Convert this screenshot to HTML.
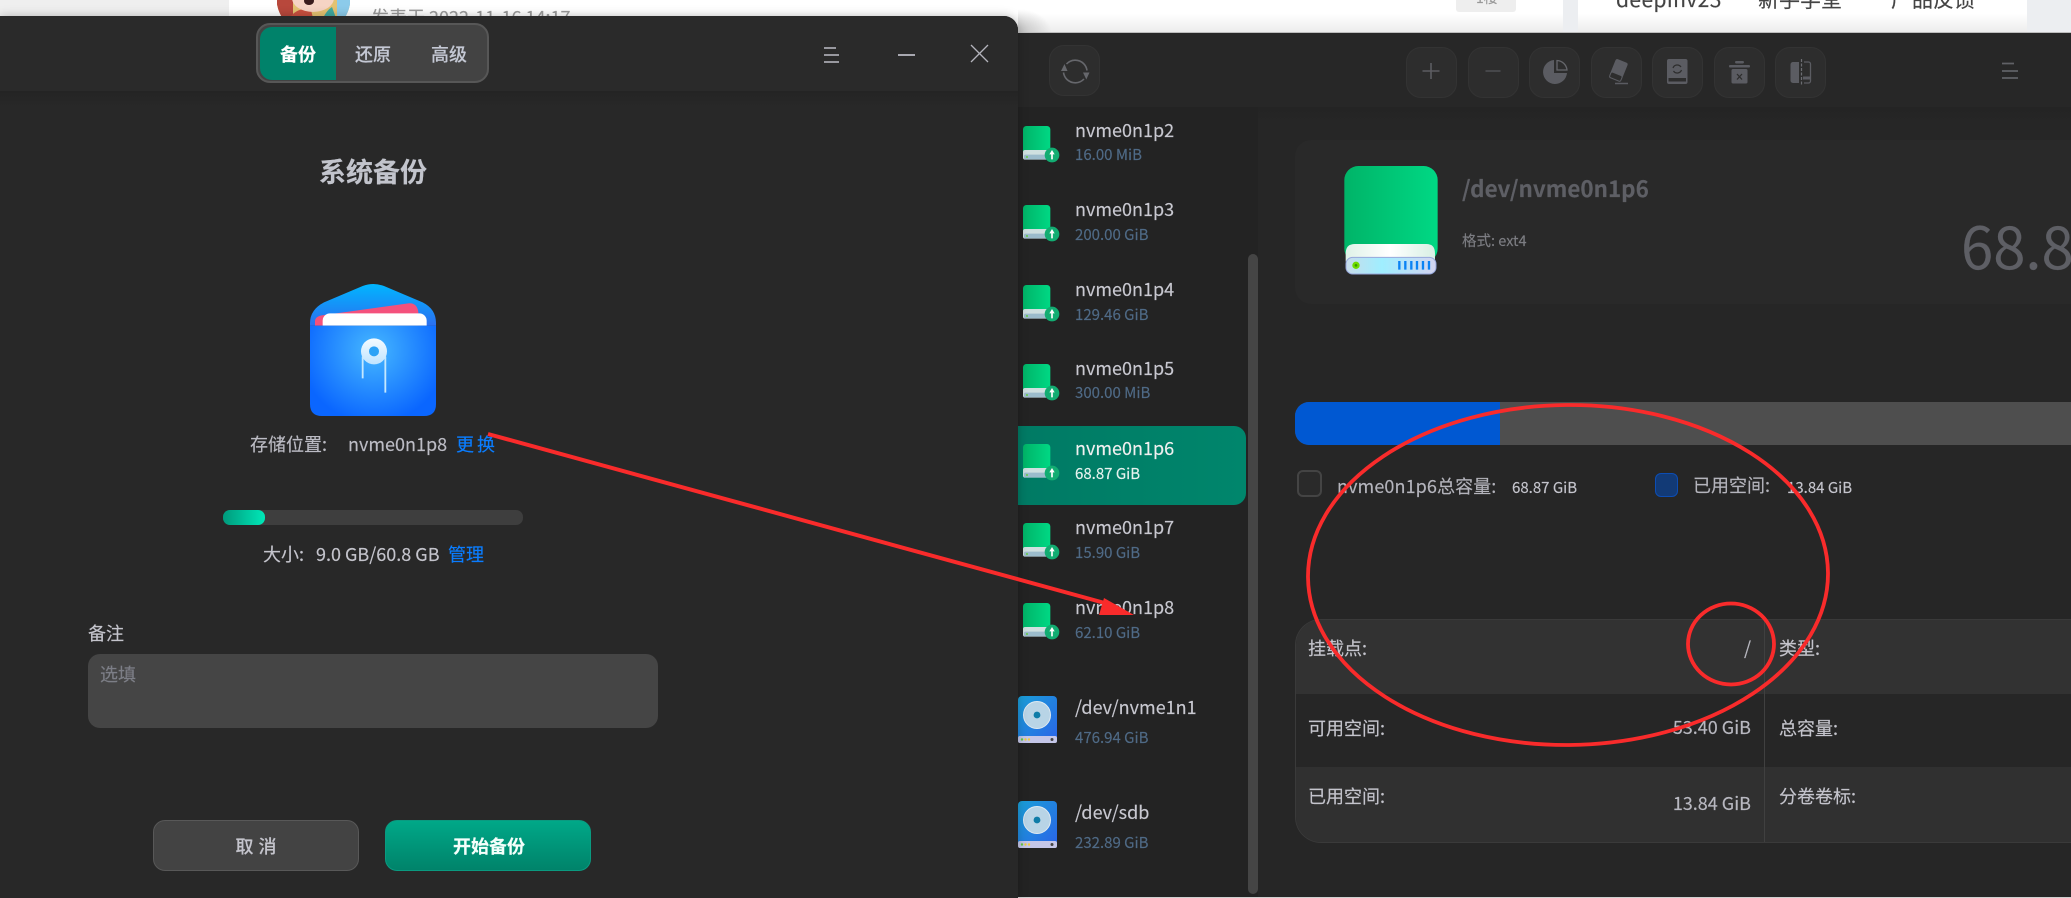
<!DOCTYPE html>
<html lang="zh"><head><meta charset="utf-8"><title>系统备份</title>
<style>
html,body{margin:0;padding:0;width:2071px;height:898px;overflow:hidden;background:#262626}
body{position:relative;font-family:"Noto Sans CJK SC","Liberation Sans",sans-serif;font-size:18px;color:#c4c4cc;-webkit-text-stroke:.15px currentColor}
div,span,svg{position:absolute}
.t{line-height:26px;height:26px;white-space:nowrap}
.c{transform:translateX(-50%)}
.n{left:1075px;color:#c8c8d0;font-size:18px}
.s{left:1075px;color:#4f6a86;font-size:15px}
.b{width:49px;height:49px;border:1px solid #333;border-radius:15px;background:#2d2d2d;box-sizing:content-box}
.v{right:320px;color:#b8b8c0;text-align:right}
</style></head><body>
<!-- web page behind -->
<div style="left:0;top:0;width:2071px;height:33px;background:linear-gradient(#fff 40%,#ececec)"></div>
<div style="left:0;top:0;width:229px;height:33px;background:#efefef"></div>
<div style="left:1563px;top:0;width:15px;height:33px;background:#eceef1"></div>
<div style="left:2027px;top:0;width:44px;height:33px;background:#eceef1"></div>
<div style="left:1018px;top:8px;width:34px;height:25px;background:radial-gradient(ellipse 34px 24px at 0 100%,#c0c0c0,rgba(255,255,255,0))"></div>
<svg style="left:277px;top:0" width="73" height="18" viewBox="0 0 73 18">
<defs><clipPath id="av"><circle cx="36.500" cy="-2" r="37"/></clipPath></defs>
<g clip-path="url(#av)">
<rect x="0" y="0" width="73" height="18" fill="#e4c272"/>
<rect x="0" y="0" width="16" height="18" fill="#b8483c"/>
<rect x="60" y="0" width="13" height="18" fill="#8ccbea"/>
<path d="M12 18Q22 6 34 10L36 18z" fill="#c9503f"/>
<ellipse cx="36" cy="-2" rx="21" ry="14" fill="#f6d4c4"/>
<ellipse cx="32" cy="1" rx="5" ry="4" fill="#3a1c1c"/>
<path d="M46 18q4-8 9-11l4 11z" fill="#3fa8a0"/>
</g></svg>
<div class="t" style="left:371px;top:4px;color:#9a9a9a;font-size:18px">发表于 2022-11-16 14:17</div>
<div style="left:1456px;top:0;width:60px;height:12px;background:#eee;border-radius:0 0 3px 3px"></div>
<div class="t" style="left:1476px;top:-15px;color:#999;font-size:14px">1楼</div>
<div class="t" style="left:1616px;top:-14px;color:#444;font-size:21px;letter-spacing:.4px">deepinv23</div>
<div class="t" style="left:1758px;top:-14px;color:#444;font-size:21px">新手学堂</div>
<div class="t" style="left:1891px;top:-14px;color:#444;font-size:21px">产品反馈</div>

<!-- right window -->
<div style="left:1018px;top:32px;width:1053px;height:865px;background:#262626;border-top:1px solid #bdbdbd;box-sizing:border-box"></div>
<div style="left:0;top:897px;width:2071px;height:1px;background:#cfcfcf"></div>
<div style="left:1018px;top:33px;width:1053px;height:74px;background:#272727"></div>
<div style="left:1018px;top:107px;width:240px;height:790px;background:#232323"></div>
<div style="left:1258px;top:107px;width:813px;height:16px;background:linear-gradient(#242424,#262626)"></div>

<div class="b" style="left:1049px;top:45px"></div>
<div class="b" style="left:1406px;top:47px"></div>
<div class="b" style="left:1468px;top:47px"></div>
<div class="b" style="left:1529px;top:47px"></div>
<div class="b" style="left:1591px;top:47px"></div>
<div class="b" style="left:1652px;top:47px"></div>
<div class="b" style="left:1714px;top:47px"></div>
<div class="b" style="left:1775px;top:47px"></div>

<div style="left:1018px;top:426px;width:228px;height:79px;background:linear-gradient(90deg,#007a64,#00866c);border-radius:0 12px 12px 0"></div>
<div style="left:1248px;top:254px;width:10px;height:640px;background:#454545;border-radius:5px"></div>

<div style="left:1295px;top:140px;width:776px;height:164px;background:#292929;border-radius:16px 0 0 16px"></div>
<div style="left:1295px;top:402px;width:776px;height:43px;background:#4e4e4e;border-radius:14px 0 0 14px"></div>
<div style="left:1295px;top:402px;width:205px;height:43px;background:#0058d2;border-radius:14px 0 0 14px"></div>
<div style="left:1297px;top:470px;width:25px;height:27px;background:#2a2a2a;border:2px solid #444;border-radius:6px;box-sizing:border-box"></div>
<div style="left:1655px;top:473px;width:23px;height:24px;background:#123a76;border:1px solid #0c4db4;border-radius:6px;box-sizing:border-box"></div>

<div style="left:1295px;top:619px;width:776px;height:224px;background:#262626;border:1px solid #3a3a3a;border-right:0;border-radius:26px 0 0 26px;box-sizing:border-box;overflow:hidden">
 <div style="left:0;top:0;width:776px;height:74px;background:#323232"></div>
 <div style="left:0;top:147px;width:776px;height:77px;background:#303030"></div>
 <div style="left:468px;top:0;width:1px;height:224px;background:#404040"></div>
</div>

<!-- graphics for the right window -->
<svg style="left:0;top:0" width="2071" height="898" viewBox="0 0 2071 898" fill="none">
<defs>
<linearGradient id="g1" x1="0" x2="1" y1="0" y2="0"><stop offset="0" stop-color="#00b468"/><stop offset="1" stop-color="#00d884"/></linearGradient>
<linearGradient id="g2" x1="0" x2="1" y1="0" y2="0"><stop offset="0" stop-color="#c8dcea"/><stop offset=".4" stop-color="#9feeff"/><stop offset="1" stop-color="#d4d4f0"/></linearGradient>
<linearGradient id="g3" x1="0" x2="1" y1="0" y2="0"><stop offset="0" stop-color="#dff2e8"/><stop offset=".5" stop-color="#fff"/><stop offset="1" stop-color="#d8efe4"/></linearGradient>
<linearGradient id="g4" x1="0" x2="1" y1="0" y2="1"><stop offset="0" stop-color="#1aa0d8"/><stop offset="1" stop-color="#2a62e8"/></linearGradient>
<symbol id="sd" viewBox="0 0 120 110" overflow="visible">
 <rect x="30" y="0" width="82" height="90" rx="10" fill="url(#g1)"/>
 <rect x="30" y="72" width="82" height="29" rx="6" fill="#cfe0e0"/>
 <rect x="33" y="86" width="76" height="14" rx="5" fill="#9cbccc"/>
 <circle cx="42" cy="93" r="3" fill="#6c4"/>
 <circle cx="117" cy="87" r="22" fill="#12ad72"/>
 <path d="M117 80v20" stroke="#fff" stroke-width="5"/>
 <path d="M109 85l8-13 8 13z" fill="#fff"/>
</symbol>
<symbol id="bd" viewBox="0 0 39 48" overflow="visible">
 <rect x="0" y="0" width="39" height="47" rx="4" fill="url(#g4)"/>
 <circle cx="19" cy="19" r="13.5" fill="#b8d4e6" stroke="#dfeaf2" stroke-width="1"/>
 <circle cx="19" cy="19" r="3.4" fill="#0e7ca8"/>
 <rect x="0" y="40" width="39" height="7" rx="2" fill="#c4c6e8"/>
 <circle cx="4" cy="43.5" r="1.2" fill="#6c4"/><circle cx="7.5" cy="43.5" r="1.2" fill="#ec4"/><circle cx="11" cy="43.5" r="1.2" fill="#ec4"/>
 <circle cx="34" cy="43.5" r="1.5" fill="#444"/>
</symbol>
</defs>
<!-- sync -->
<path d="M1066.500 64a12 12 0 0 1 17-.5 12 12 0 0 1 3.500 7M1084 79a12 12 0 0 1-17 .5 12 12 0 0 1-3.500-7" stroke="#66676c" stroke-width="1.600"/>
<path d="M1061 71l3.500-7 3 7zM1083 72.500h6.500l-3.200 7z" fill="#66676c"/>
<!-- plus, minus -->
<path d="M1431 63v16M1422.500 71h17" stroke="#5c5d62" stroke-width="1.600"/>
<path d="M1485.500 71h15" stroke="#4d4e52" stroke-width="1.600"/>
<!-- pie -->
<path d="M1554 60v13h13a12 12 0 1 1-13-13z" fill="#5b5c62"/>
<path d="M1557 60.500a10.500 10.500 0 0 1 10 9.500h-10z" stroke="#66676c" stroke-width="1.300"/>
<!-- eraser -->
<g transform="rotate(22 1618 70)"><rect x="1612" y="60" width="13" height="19" rx="2" fill="#5b5c62"/><rect x="1612.500" y="74" width="12" height="6" rx="1.500" fill="#2d2d2d" stroke="#5b5c62"/></g>
<path d="M1615 83.500h13" stroke="#5b5c62" stroke-width="1.500"/>
<!-- book -->
<rect x="1667" y="59" width="20.500" height="25" rx="2" fill="#5b5c62"/>
<rect x="1668.500" y="78" width="17.500" height="3.500" fill="#2d2d2d"/>
<path d="M1673 68a4.500 4.500 0 0 1 8-1M1681.500 70a4.500 4.500 0 0 1-8 1" stroke="#2d2d2d" stroke-width="1.200"/>
<!-- trash -->
<rect x="1735" y="61" width="9" height="2.500" rx="1.200" fill="#5b5c62"/>
<rect x="1729" y="65" width="21" height="2.500" rx="1" fill="#5b5c62"/>
<rect x="1731.500" y="69" width="16" height="14.500" rx="1.500" fill="#5b5c62"/>
<path d="M1737 74l5 5.500M1742 74l-5 5.500" stroke="#2d2d2d" stroke-width="1.300"/>
<!-- split -->
<path d="M1799 62h-6a2.500 2.500 0 0 0-2.500 2.500v16a2.500 2.500 0 0 0 2.500 2.500h6z" fill="#5b5c62"/>
<path d="M1804 62h4.500a2 2 0 0 1 2 2v17a2 2 0 0 1-2 2H1804" stroke="#5b5c62" stroke-width="1.300"/>
<path d="M1801.500 59v26" stroke="#6c6d72" stroke-width="1.200" stroke-dasharray="3 1.500"/>
<path d="M1803 78h7" stroke="#5b5c62" stroke-width="3"/>
<!-- window menu -->
<path d="M2002 63.500h12M2002 71h16M2002 78h16" stroke="#606166" stroke-width="1.800"/>
<!-- sidebar icons -->
<use href="#sd" x="1013" y="126" width="40" height="36.700"/>
<use href="#sd" x="1013" y="205" width="40" height="36.700"/>
<use href="#sd" x="1013" y="285" width="40" height="36.700"/>
<use href="#sd" x="1013" y="364" width="40" height="36.700"/>
<use href="#sd" x="1013" y="444" width="40" height="36.700"/>
<use href="#sd" x="1013" y="523" width="40" height="36.700"/>
<use href="#sd" x="1013" y="603" width="40" height="36.700"/>
<use href="#bd" x="1018" y="696" width="39" height="48"/>
<use href="#bd" x="1018" y="801" width="39" height="48"/>
<!-- big drive -->
<g transform="translate(1320 150) scale(.3333)">
 <rect x="73" y="48" width="280" height="290" rx="42" fill="url(#g1)"/>
 <path d="M77 335v-25q0-28 28-28h214q26 0 26 28v25z" fill="url(#g3)"/>
 <rect x="78" y="322" width="270" height="50" rx="20" fill="url(#g2)" stroke="#97a8dc" stroke-width="3"/>
 <circle cx="108" cy="346" r="11" fill="#6fdc00"/><circle cx="108" cy="346" r="4" fill="#3a9a00"/>
 <path d="M238 333v26M256 333v26M274 333v26M291 333v26M309 333v26M327 333v26" stroke="#0a82f4" stroke-width="7"/>
</g>
</svg>

<!-- sidebar text -->
<div class="t n" style="top:117px">nvme0n1p2</div><div class="t s" style="top:142px">16.00 MiB</div>
<div class="t n" style="top:196px">nvme0n1p3</div><div class="t s" style="top:222px">200.00 GiB</div>
<div class="t n" style="top:276px">nvme0n1p4</div><div class="t s" style="top:302px">129.46 GiB</div>
<div class="t n" style="top:355px">nvme0n1p5</div><div class="t s" style="top:380px">300.00 MiB</div>
<div class="t n" style="top:435px;color:#f0f0f0">nvme0n1p6</div><div class="t s" style="top:461px;color:#e6f2ee">68.87 GiB</div>
<div class="t n" style="top:514px">nvme0n1p7</div><div class="t s" style="top:540px">15.90 GiB</div>
<div class="t n" style="top:594px">nvme0n1p8</div><div class="t s" style="top:620px">62.10 GiB</div>
<div class="t n" style="top:694px">/dev/nvme1n1</div><div class="t s" style="top:725px">476.94 GiB</div>
<div class="t n" style="top:799px">/dev/sdb</div><div class="t s" style="top:830px">232.89 GiB</div>

<!-- info text -->
<div class="t" style="left:1462px;top:175px;font-size:22.400px;font-weight:700;color:#5e5f65">/dev/nvme0n1p6</div>
<div class="t" style="left:1462px;top:228px;font-size:14.500px;color:#7c7d82">格式: ext4</div>
<div class="t" style="left:1961px;top:214px;font-size:58px;line-height:60px;height:60px;color:#5e5f65">68.87</div>
<div class="t" style="left:1337px;top:473px;color:#b4b4bc;letter-spacing:.1px">nvme0n1p6总容量:</div>
<div class="t" style="left:1512px;top:475px;font-size:15px;color:#c4c4cc">68.87 GiB</div>
<div class="t" style="left:1693px;top:472px;color:#b4b4bc">已用空间:</div>
<div class="t" style="left:1787px;top:475px;font-size:15px;color:#c4c4cc">13.84 GiB</div>
<div class="t" style="left:1308px;top:635px">挂载点:</div>
<div class="t v" style="top:635px">/</div>
<div class="t" style="left:1779px;top:635px">类型:</div>
<div class="t" style="left:1308px;top:715px">可用空间:</div>
<div class="t v" style="top:714px">53.40 GiB</div>
<div class="t" style="left:1779px;top:715px">总容量:</div>
<div class="t" style="left:1308px;top:783px">已用空间:</div>
<div class="t v" style="top:790px">13.84 GiB</div>
<div class="t" style="left:1779px;top:783px">分卷卷标:</div>

<!-- dialog -->
<div style="left:0;top:16px;width:1018px;height:882px;background:#282828;border-radius:0 14px 0 0;box-shadow:0 0 10px rgba(0,0,0,.25);overflow:hidden">
 <div style="left:0;top:0;width:1018px;height:75px;background:#2a2a2a"></div>
 <div style="left:0;top:75px;width:1018px;height:16px;background:linear-gradient(#242424,#282828)"></div>
</div>
<div style="left:256px;top:23px;width:233px;height:60px;background:#434343;border:2px solid #575757;border-radius:14px;box-sizing:border-box"></div>
<div style="left:260px;top:27px;width:76px;height:53px;background:#00826a;border-radius:12px 0 0 12px"></div>
<div class="t c" style="left:298px;top:41px;color:#fff;font-weight:700">备份</div>
<div class="t c" style="left:373px;top:41px;color:#c4c8d4;font-weight:500">还原</div>
<div class="t c" style="left:449px;top:41px;color:#c4c8d4;font-weight:500">高级</div>

<div class="t c" style="left:373px;top:153px;height:36px;line-height:36px;font-size:27px;font-weight:700;color:#c2c4cc">系统备份</div>

<svg style="left:280px;top:260px" width="200" height="170" viewBox="0 0 600 510">
<defs>
<linearGradient id="f1" x1="0" x2="0" y1="0" y2="1"><stop offset="0" stop-color="#00b6ff"/><stop offset="1" stop-color="#2b6ff0"/></linearGradient>
<radialGradient id="f2" gradientUnits="userSpaceOnUse" cx="280" cy="270" r="220"><stop offset="0" stop-color="#46b8ff"/><stop offset="1" stop-color="#0a66ff"/></radialGradient>
<linearGradient id="f3" x1="0" x2="0" y1="0" y2="1"><stop offset="0" stop-color="#f4fbff"/><stop offset="1" stop-color="#bfe4ff"/></linearGradient>
<clipPath id="cl"><rect x="0" y="0" width="600" height="197"/></clipPath>
</defs>
<path d="M90 197v-8q0-40 42-62L248 78q32-12 64 0l116 49q40 20 40 62v8z" fill="url(#f1)"/>
<g clip-path="url(#cl)">
<path d="M105 200v-16q0-14 20-18L385 130q26-2 30 26v44z" fill="#f4517c"/>
<rect x="128" y="160" width="312" height="70" rx="22" fill="#fff"/>
</g>
<path d="M90 197H468V432q0 36-36 36H126q-36 0-36-36z" fill="url(#f2)"/>
<path d="M248 290v65M316 290v108" stroke="#c4e8ff" stroke-width="5.500"/>
<circle cx="282" cy="274" r="39" fill="url(#f3)"/>
<circle cx="282" cy="274" r="15" fill="#2ca2f6"/>
</svg>

<div class="t" style="left:250px;top:431px;color:#bcbcc4">存储位置:</div>
<div class="t" style="left:348px;top:431px;color:#bcbcc4">nvme0n1p8</div>
<div class="t" style="left:456px;top:431px;color:#0a7dff;letter-spacing:3px">更换</div>

<div style="left:223px;top:510px;width:300px;height:15px;background:#3e3e3e;border-radius:7px"></div>
<div style="left:223px;top:510px;width:42px;height:15px;background:linear-gradient(90deg,#009a7c,#00e8b8);border-radius:7px"></div>
<div class="t" style="left:263px;top:541px;color:#c4c4cc">大小:</div>
<div class="t" style="left:316px;top:541px;color:#c4c4cc">9.0 GB/60.8 GB</div>
<div class="t" style="left:448px;top:541px;color:#0a7dff">管理</div>

<div class="t" style="left:88px;top:620px;color:#c4c4cc">备注</div>
<div style="left:88px;top:654px;width:570px;height:74px;background:#454545;border-radius:12px"></div>
<div class="t" style="left:100px;top:661px;color:#7c7e86">选填</div>

<div style="left:153px;top:820px;width:206px;height:51px;background:#434343;border:1px solid #585858;border-radius:12px;box-sizing:border-box"></div>
<div class="t c" style="left:258.500px;top:833px;color:#c4c4cc;font-weight:500;letter-spacing:5px">取消</div>
<div style="left:385px;top:820px;width:206px;height:51px;background:linear-gradient(#00a888,#00836a);border:1px solid #0a9a80;border-radius:12px;box-sizing:border-box"></div>
<div class="t c" style="left:489px;top:833px;color:#f4fffb;font-weight:700">开始备份</div>

<svg style="left:0;top:0" width="2071" height="898" viewBox="0 0 2071 898" fill="none">
<path d="M824 48h12M824 55h15M824 62h15" stroke="#a8a8b0" stroke-width="1.800"/>
<path d="M898 55h17" stroke="#a8a8b0" stroke-width="2"/>
<path d="M971 45l17 17M988 45l-17 17" stroke="#b4b4bc" stroke-width="1.300"/>
<!-- annotations -->
<path d="M488 434L1112 605" stroke="#f92b2b" stroke-width="4"/>
<path d="M1134 615L1104 598L1099 615Z" fill="#f92b2b"/>
<ellipse cx="1568" cy="575" rx="260" ry="170" stroke="#f92b2b" stroke-width="3.800" transform="rotate(-.5 1568 575)"/>
<ellipse cx="1731" cy="644" rx="43" ry="40.500" stroke="#f92b2b" stroke-width="3.800"/>
</svg>
</body></html>
